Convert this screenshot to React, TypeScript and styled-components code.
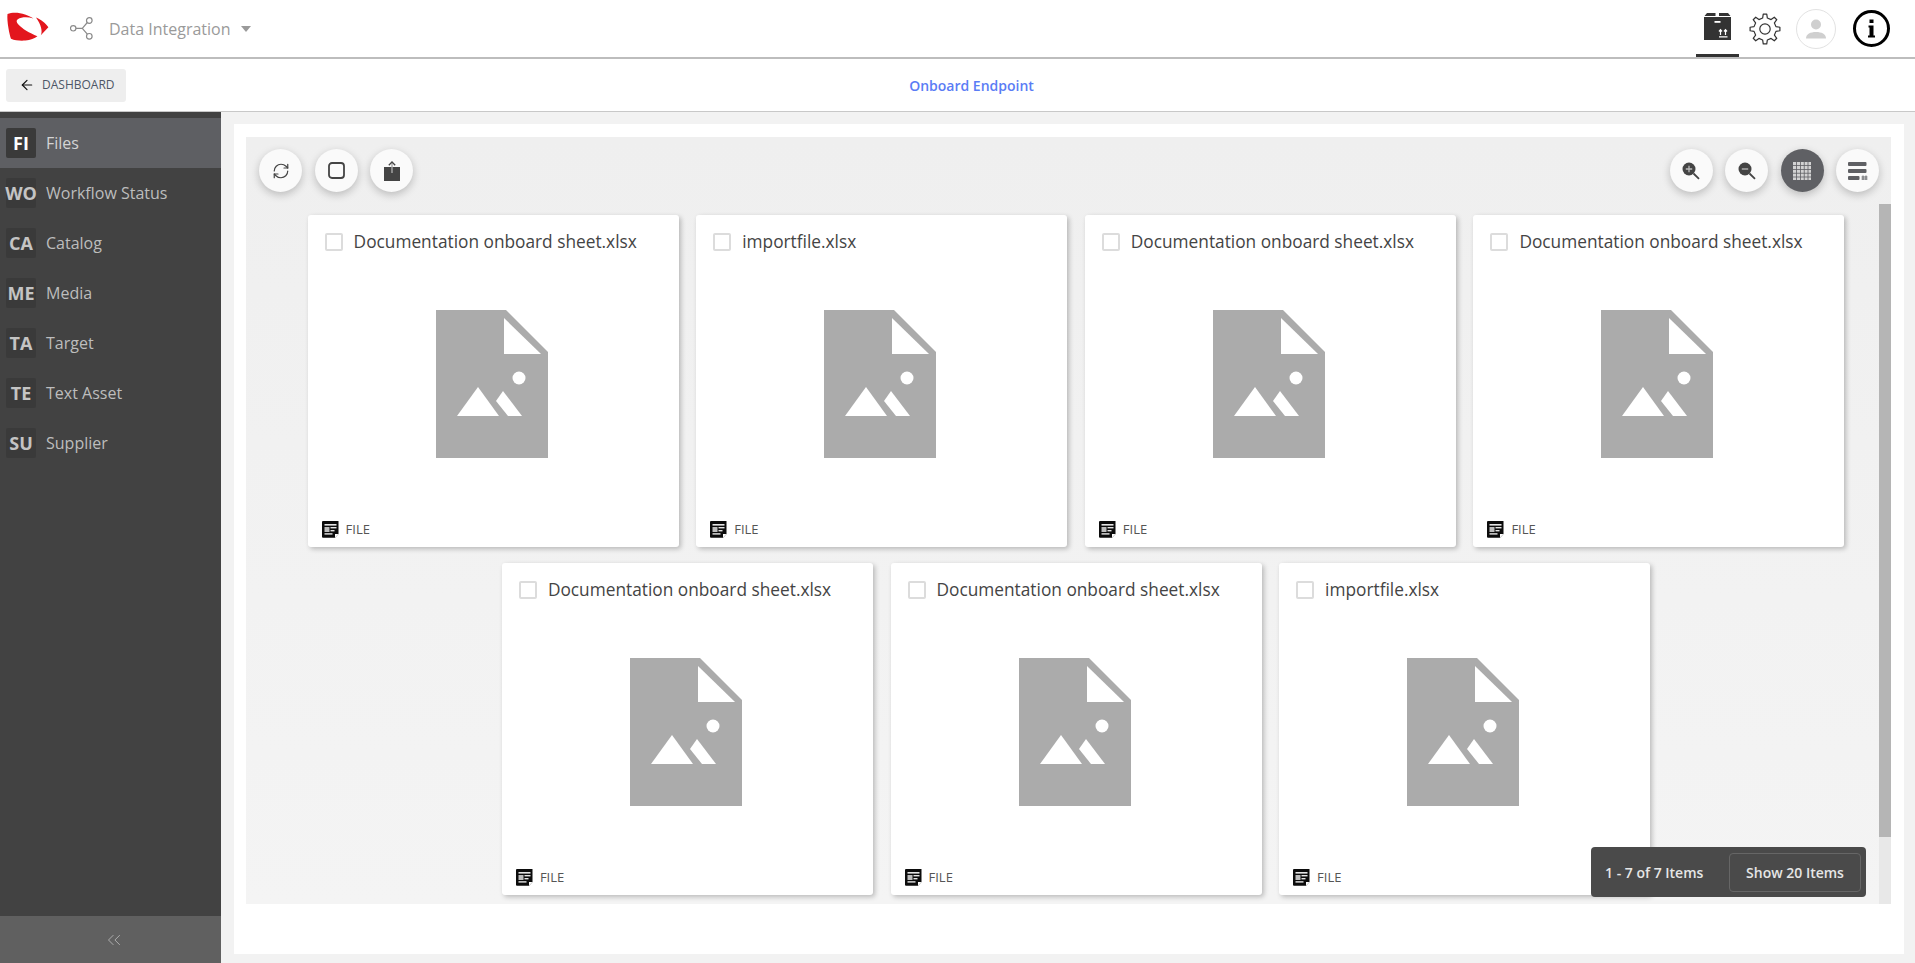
import styled, { createGlobalStyle } from 'styled-components';
import { ArrowLeft, ChevronsLeft, RefreshCw } from 'lucide-react';

const GlobalStyle = createGlobalStyle`
  html, body {
    margin: 0;
    padding: 0;
    height: 100%;
    overflow: hidden;
    background: #f2f2f2;
    font-family: 'Open Sans', 'Liberation Sans', sans-serif;
  }
  * {
    box-sizing: border-box;
  }
`;

const NAV_ITEMS = [
  { code: 'FI', label: 'Files' },
  { code: 'WO', label: 'Workflow Status' },
  { code: 'CA', label: 'Catalog' },
  { code: 'ME', label: 'Media' },
  { code: 'TA', label: 'Target' },
  { code: 'TE', label: 'Text Asset' },
  { code: 'SU', label: 'Supplier' },
];

const DOC_SHEET = 'Documentation onboard sheet.xlsx';
const IMPORT_FILE = 'importfile.xlsx';
const FILES = [DOC_SHEET, IMPORT_FILE, DOC_SHEET, DOC_SHEET, DOC_SHEET, DOC_SHEET, IMPORT_FILE];

function gearPath() {
  const cx = 16;
  const cy = 16;
  const teeth = 8;
  const points: string[] = [];
  for (let i = 0; i < teeth; i++) {
    const a = (i / teeth) * Math.PI * 2 - Math.PI / 2;
    const step = (Math.PI * 2) / teeth;
    const corners: [number, number][] = [
      [11.2, a - step * 0.27],
      [15, a - step * 0.15],
      [15, a + step * 0.15],
      [11.2, a + step * 0.27],
    ];
    corners.forEach(([r, t]) => {
      points.push(`${(cx + r * Math.cos(t)).toFixed(2)} ${(cy + r * Math.sin(t)).toFixed(2)}`);
    });
  }
  return `M${points.join('L')}Z`;
}

function Logo() {
  return (
    <LogoSvg viewBox="0 0 44 30" aria-hidden="true">
      <path d="M1.5 2C6 .2 13 .4 19 2.4c3.6 1.2 6.6 2.6 8.4 4-5.6-1.6-12-1.4-15.6.8-1.8 1.2-1.4 3 .6 5.4 3.6 4 11 8.6 19 11.6-2.6 2.2-7 3.6-12 4.4C14.600 29 9 28.600 5 26.800 3.600 23 .6 9 1.500 2Z" fill="#e3161d" />
      <path d="M30 5.500c4.600 1.700 9.600 5.400 12.400 9.800l-7.600 7.900c2-3.600 .4-10.500-4.800-17.700Z" fill="#e3161d" />
    </LogoSvg>
  );
}

function ShareNodes() {
  return (
    <NodesSvg viewBox="0 0 23 23" aria-hidden="true" fill="none" stroke="#8a8a8a" strokeWidth="1.200">
      <circle cx="3.200" cy="11.300" r="2.700" />
      <circle cx="19.300" cy="3.500" r="2.800" />
      <circle cx="19.300" cy="19.300" r="2.800" />
      <path d="M6 11.300h6.300M12.300 11.300l5-5.800M12.300 11.300l5 5.800" />
    </NodesSvg>
  );
}

function BoxIcon() {
  return (
    <svg width="27" height="27" viewBox="0 0 27 27" aria-hidden="true">
      <path d="M3 0h8.500v3H0.500ZM15 0h9l2.500 3H15Z" fill="#333" />
      <rect x="0" y="4" width="27" height="23" fill="#333" />
      <rect x="10.500" y="8" width="6" height="1.800" fill="#fff" />
      <path d="M16.500 22v-5M15 18.500l1.500-1.800 1.500 1.800M21.500 22v-5M20 18.500l1.500-1.800 1.500 1.800M15 23.800h8.500" stroke="#fff" strokeWidth="1.200" fill="none" />
    </svg>
  );
}

function GearIcon() {
  return (
    <svg width="32" height="32" viewBox="0 0 32 32" aria-hidden="true" fill="none" stroke="#333" strokeWidth="1.200" strokeLinejoin="round">
      <path d={gearPath()} />
      <circle cx="16" cy="16" r="5.200" />
    </svg>
  );
}

function UserIcon() {
  return (
    <svg width="22" height="22" viewBox="0 0 22 22" aria-hidden="true" fill="#cfcfcf">
      <circle cx="11" cy="6.500" r="5" />
      <path d="M1 20.500c0-4.500 4.500-6.500 10-6.500s10 2 10 6.500Z" />
    </svg>
  );
}

function InfoIcon() {
  return (
    <svg width="37" height="37" viewBox="0 0 37 37" aria-hidden="true">
      <circle cx="18.500" cy="18.500" r="17" fill="none" stroke="#000" strokeWidth="3" />
      <rect x="16.500" y="9.500" width="4" height="3.500" fill="#000" />
      <path d="M15.500 15.500h5v10h1.500v2h-7v-2h1.500v-8h-1Z" fill="#000" />
    </svg>
  );
}

function SquareIcon() {
  return (
    <svg width="17" height="17" viewBox="0 0 17 17" aria-hidden="true">
      <rect x="1" y="1" width="15" height="15" rx="3" fill="none" stroke="#444" strokeWidth="1.800" />
    </svg>
  );
}

function ExportIcon() {
  return (
    <svg width="16" height="20" viewBox="0 0 16 20" aria-hidden="true">
      <rect x="0" y="6" width="16" height="14" fill="#444" />
      <path d="M8 12V1" stroke="#aaa" strokeWidth="1.400" />
      <path d="M4.800 4.200 8 1l3.200 3.200" stroke="#444" strokeWidth="1.300" fill="none" />
    </svg>
  );
}

function ZoomIcon({ plus }: { plus?: boolean }) {
  return (
    <svg width="18" height="18" viewBox="0 0 18 18" aria-hidden="true">
      <circle cx="7" cy="7" r="6.500" fill="#444" />
      <path d={plus ? 'M3.800 7h6.400M7 3.800v6.400' : 'M3.800 7h6.400'} stroke="#bbb" strokeWidth="1.300" />
      <path d="M11.500 11.500 17 16.800" stroke="#444" strokeWidth="1.800" />
    </svg>
  );
}

function GridIcon() {
  const lines = [1, 4.800, 8.600, 12.400, 16.200];
  return (
    <svg width="18" height="18" viewBox="0 0 18 18" aria-hidden="true">
      <rect width="18" height="18" fill="#d2d2d2" />
      {lines.map((v) => (
        <g key={v} fill="#5f6064">
          <rect x={v + 2.200} y="0" width="0.800" height="18" />
          <rect x="0" y={v + 2.200} width="18" height="0.800" />
        </g>
      ))}
    </svg>
  );
}

function ListIcon() {
  return (
    <svg width="20" height="18" viewBox="0 0 20 18" aria-hidden="true">
      <rect x="0" y="0" width="18.500" height="4" rx="1" fill="#5f6064" />
      <rect x="0" y="7" width="18.500" height="4" rx="1" fill="#5f6064" />
      <rect x="0" y="14" width="11.500" height="4" rx="1" fill="#5f6064" />
      <path d="M15 13.500v5M18 13.500v5M13.500 15h6M13.500 17h6" stroke="#5f6064" strokeWidth="0.900" />
    </svg>
  );
}

function FilePlaceholder() {
  return (
    <PlaceholderSvg viewBox="0 0 112 148" aria-hidden="true">
      <path d="M0 0H70L112 42V148H0Z" fill="#ababab" />
      <path d="M68 8V44H105Z" fill="#fff" />
      <circle cx="83" cy="68" r="6.500" fill="#fff" />
      <path d="M42 77 63 106H21Z" fill="#fff" />
      <path d="M60 91 67 81 86 106H72Z" fill="#fff" />
    </PlaceholderSvg>
  );
}

function FileTypeIcon() {
  return (
    <svg width="17" height="17" viewBox="0 0 17 17" aria-hidden="true">
      <path d="M1 0H16.500V13L13 16.800H1a1 1 0 0 1-1-1V1a1 1 0 0 1 1-1Z" fill="#0c0c0c" />
      <rect x="2.500" y="3" width="12" height="1.600" fill="#e6e6e6" />
      <rect x="2.500" y="6" width="5" height="5" fill="#bdbdbd" />
      <rect x="8.500" y="6" width="6" height="1.400" fill="#e6e6e6" />
      <rect x="8.500" y="9" width="4" height="1.400" fill="#e6e6e6" />
      <rect x="2.500" y="12.200" width="8" height="1.400" fill="#e6e6e6" />
      <path d="M13 13h3.500L13 16.800Z" fill="#fff" />
    </svg>
  );
}

function FileCard({ name }: { name: string }) {
  return (
    <Card>
      <CardHeader>
        <Checkbox />
        <CardTitle>{name}</CardTitle>
      </CardHeader>
      <FilePlaceholder />
      <CardFooter>
        <FileTypeIcon />
        <CardType>FILE</CardType>
      </CardFooter>
    </Card>
  );
}

export default function App() {
  return (
    <Page>
      <GlobalStyle />
      <Header>
        <Logo />
        <ShareNodes />
        <ModuleName>Data Integration</ModuleName>
        <Caret />
        <HeaderActions>
          <BoxTab>
            <BoxIcon />
          </BoxTab>
          <GearSlot>
            <GearIcon />
          </GearSlot>
          <Avatar>
            <UserIcon />
          </Avatar>
          <InfoSlot>
            <InfoIcon />
          </InfoSlot>
        </HeaderActions>
      </Header>
      <SubBar>
        <BackButton>
          <ArrowLeft size={16} color="#111" strokeWidth={1.800} />
          <BackLabel>DASHBOARD</BackLabel>
        </BackButton>
        <PageTitle>Onboard Endpoint</PageTitle>
      </SubBar>
      <Body>
        <Sidebar>
          <NavList>
            {NAV_ITEMS.map((item, i) => (
              <NavRow key={item.code} $active={i === 0}>
                <NavBadge $active={i === 0}>{item.code}</NavBadge>
                <NavLabel $active={i === 0}>{item.label}</NavLabel>
              </NavRow>
            ))}
          </NavList>
          <CollapseBar>
            <ChevronsLeft size={22} color="#b4b4b4" strokeWidth={1} />
          </CollapseBar>
        </Sidebar>
        <Main>
          <WhitePanel>
            <GrayPanel>
              <Toolbar>
                <ToolGroup>
                  <RoundButton>
                    <RefreshCw size={18} color="#444" strokeWidth={1.600} />
                  </RoundButton>
                  <RoundButton>
                    <SquareIcon />
                  </RoundButton>
                  <RoundButton>
                    <ExportIcon />
                  </RoundButton>
                </ToolGroup>
                <ToolGroup>
                  <RoundButton>
                    <ZoomIcon plus />
                  </RoundButton>
                  <RoundButton>
                    <ZoomIcon />
                  </RoundButton>
                  <RoundButton $active>
                    <GridIcon />
                  </RoundButton>
                  <RoundButton>
                    <ListIcon />
                  </RoundButton>
                </ToolGroup>
              </Toolbar>
              <ScrollRow>
                <CardGrid>
                  {FILES.map((name, i) => (
                    <FileCard key={i} name={name} />
                  ))}
                </CardGrid>
                <ScrollTrack>
                  <ScrollThumb />
                </ScrollTrack>
              </ScrollRow>
              <Pager>
                <PagerCount>1 - 7 of 7 Items</PagerCount>
                <PagerButton>Show 20 Items</PagerButton>
              </Pager>
            </GrayPanel>
          </WhitePanel>
        </Main>
      </Body>
    </Page>
  );
}

const Page = styled.div`
  display: flex;
  flex-direction: column;
  height: 100vh;
  overflow: hidden;
`;

const Header = styled.header`
  display: flex;
  align-items: center;
  flex: 0 0 59px;
  padding-left: 6px;
  background: #fff;
  border-bottom: 2px solid #bdbdbd;
`;

const LogoSvg = styled.svg`
  width: 44px;
  height: 30px;
  margin: -4px 20px 0 0;
`;

const NodesSvg = styled.svg`
  width: 23px;
  height: 23px;
  margin-right: 16px;
`;

const ModuleName = styled.span`
  font-size: 16px;
  color: #9a9a9a;
`;

const Caret = styled.span`
  width: 0;
  height: 0;
  margin: 0 0 0 10px;
  border-left: 5px solid transparent;
  border-right: 5px solid transparent;
  border-top: 6px solid #9a9a9a;
`;

const HeaderActions = styled.div`
  display: flex;
  align-items: center;
  align-self: stretch;
  margin-left: auto;
  padding-right: 25px;
`;

const BoxTab = styled.div`
  display: flex;
  align-items: center;
  justify-content: center;
  align-self: stretch;
  width: 43px;
  padding-bottom: 1px;
  border-bottom: 3px solid #333;
`;

const GearSlot = styled.div`
  display: flex;
  margin-left: 10px;
`;

const Avatar = styled.div`
  display: flex;
  align-items: center;
  justify-content: center;
  width: 40px;
  height: 40px;
  margin-left: 15px;
  border: 1px solid #e2e2e2;
  border-radius: 50%;
`;

const InfoSlot = styled.div`
  display: flex;
  margin-left: 17px;
`;

const SubBar = styled.div`
  display: flex;
  align-items: center;
  flex: 0 0 53px;
  position: relative;
  padding-left: 6px;
  background: #fff;
  border-bottom: 1px solid #c8c8c8;
`;

const BackButton = styled.div`
  display: flex;
  align-items: center;
  gap: 7px;
  width: 120px;
  height: 33px;
  padding-left: 13px;
  background: #eeeeee;
  border-radius: 3px;
`;

const BackLabel = styled.span`
  position: relative;
  top: -1px;
  font-size: 12px;
  color: #4d5666;
`;

const PageTitle = styled.div`
  flex: 1;
  padding-right: 98px;
  font-size: 14px;
  font-weight: 600;
  color: #5a7cf5;
  text-align: center;
`;

const Body = styled.div`
  display: flex;
  flex: 1;
  min-height: 0;
`;

const Sidebar = styled.aside`
  display: flex;
  flex-direction: column;
  flex: 0 0 221px;
  background: #424242;
`;

const NavList = styled.nav`
  flex: 1;
  padding-top: 6px;
`;

const NavRow = styled.div<{ $active?: boolean }>`
  display: flex;
  align-items: center;
  height: 50px;
  padding-left: 6px;
  background: ${({ $active }) => ($active ? '#5e5f63' : 'transparent')};
`;

const NavBadge = styled.span<{ $active?: boolean }>`
  display: flex;
  align-items: center;
  justify-content: center;
  width: 30px;
  height: 30px;
  background: #3a3a3a;
  border-radius: 2px;
  font-size: 18px;
  font-weight: 700;
  color: ${({ $active }) => ($active ? '#fff' : '#c4c4c4')};
`;

const NavLabel = styled.span<{ $active?: boolean }>`
  margin-left: 10px;
  font-size: 16px;
  color: ${({ $active }) => ($active ? '#d4d4d4' : '#bdbdbd')};
`;

const CollapseBar = styled.div`
  display: flex;
  align-items: center;
  justify-content: center;
  flex: 0 0 47px;
  padding-left: 7px;
  background: #606060;
`;

const Main = styled.main`
  display: flex;
  flex: 1;
  min-width: 0;
  padding: 12px 11px 9px 13px;
  background: #f2f2f2;
`;

const WhitePanel = styled.div`
  display: flex;
  flex: 1;
  min-width: 0;
  padding: 13px 13px 50px 12px;
  background: #fff;
`;

const GrayPanel = styled.div`
  display: flex;
  flex-direction: column;
  flex: 1;
  min-width: 0;
  position: relative;
  background: linear-gradient(#efefef, #f4f4f4);
`;

const Toolbar = styled.div`
  display: flex;
  justify-content: space-between;
  flex: 0 0 67px;
  padding: 12px 12px 0 13px;
`;

const ToolGroup = styled.div`
  display: flex;
  gap: 12.500px;
`;

const RoundButton = styled.div<{ $active?: boolean }>`
  display: flex;
  align-items: center;
  justify-content: center;
  width: 43px;
  height: 43px;
  border-radius: 50%;
  background: ${({ $active }) => ($active ? '#5f6064' : '#fafafa')};
  box-shadow: 0 3px 8px rgba(0, 0, 0, 0.22);
`;

const ScrollRow = styled.div`
  display: flex;
  flex: 1;
  min-height: 0;
`;

const CardGrid = styled.div`
  display: flex;
  flex-wrap: wrap;
  align-content: flex-start;
  justify-content: center;
  gap: 16px 17.600px;
  flex: 1;
  min-width: 0;
  overflow: hidden;
  padding: 11px 34px 0 61px;
`;

const Card = styled.article`
  display: flex;
  flex-direction: column;
  width: 371px;
  height: 332px;
  padding: 18px 17px 9px 14px;
  background: #fff;
  border-radius: 3px;
  box-shadow: 2px 2px 5px rgba(0, 0, 0, 0.24);
`;

const CardHeader = styled.div`
  display: flex;
  align-items: center;
  gap: 11px;
  height: 18px;
  padding-left: 3px;
`;

const Checkbox = styled.span`
  flex: 0 0 18px;
  height: 18px;
  border: 2px solid #dcdcdc;
  border-radius: 2px;
  background: #fff;
`;

const CardTitle = styled.span`
  font-size: 17.300px;
  line-height: 18px;
  white-space: nowrap;
  color: #444;
`;

const PlaceholderSvg = styled.svg`
  align-self: center;
  flex: none;
  width: 112px;
  height: 148px;
  margin: 59px 0 0;
`;

const CardFooter = styled.div`
  display: flex;
  align-items: center;
  gap: 7px;
  margin-top: auto;
`;

const CardType = styled.span`
  font-size: 13px;
  color: #555;
`;

const ScrollTrack = styled.div`
  flex: 0 0 12px;
  background: #e8e8e8;
`;

const ScrollThumb = styled.div`
  height: 633px;
  background: #b5b5b5;
`;

const Pager = styled.div`
  display: flex;
  align-items: center;
  position: absolute;
  right: 25px;
  bottom: 7px;
  width: 275px;
  height: 50px;
  padding: 0 5px 0 14px;
  background: #4a4a4a;
  border-radius: 4px;
  font-size: 14px;
  font-weight: 600;
  color: #e6e6e6;
`;

const PagerCount = styled.span`
  white-space: nowrap;
`;

const PagerButton = styled.div`
  display: flex;
  align-items: center;
  justify-content: center;
  width: 132px;
  height: 39px;
  margin-left: auto;
  border: 1px solid #666;
  border-radius: 4px;
  white-space: nowrap;
`;
